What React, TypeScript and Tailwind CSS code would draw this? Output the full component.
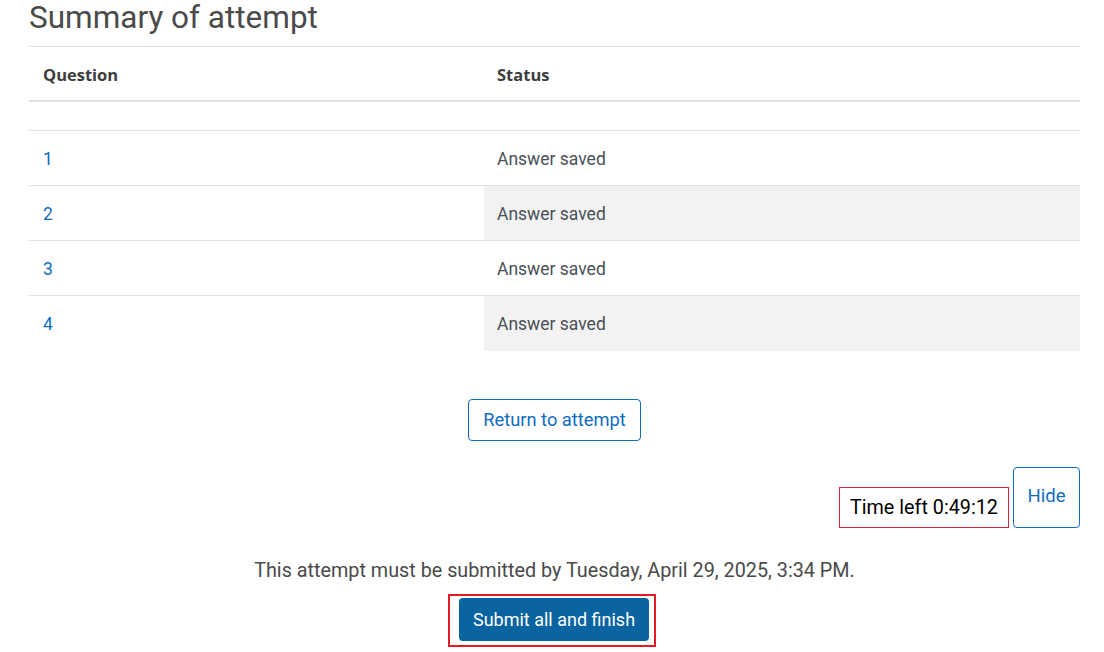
import React from "react";

const rows = [1, 2, 3, 4];

const App: React.FC = () => {
  return (
    <div className="w-[1104px] h-[652px] bg-white overflow-hidden font-['Roboto',sans-serif] text-[#495057]">
      <div className="px-[29px] pr-[24px]">
        {/* Title */}
        <h2 className="text-[31.5px] leading-[36px] text-[#4a4a4a] font-normal h-[46px]">Summary of attempt</h2>

        {/* Table */}
        <div className="border-t border-[#dee2e6]">
          <div className="flex h-[55px] items-center pt-[3px] border-b-2 border-[#dee2e6] font-['Open_Sans',sans-serif] font-bold text-[16.5px] text-[#3d3d3d]">
            <div className="w-[455px] pl-[14px]">Question</div>
            <div className="flex-1 pl-[13px]">Status</div>
          </div>
          <div className="h-[29px] border-b border-[#dee2e6]" />
          {rows.map((n, i) => (
            <div key={n} className={`flex h-[55px] text-[17.5px] ${i < rows.length - 1 ? "border-b border-[#dee2e6]" : ""}`}>
              <div className="w-[455px] pl-[14px] flex items-center text-[#0f6cbf] pt-[2px]">{n}</div>
              <div className={`flex-1 pl-[13px] flex items-center pt-[2px] ${i % 2 === 1 ? "bg-[#f2f2f2]" : ""}`}>Answer saved</div>
            </div>
          ))}
        </div>

        {/* Return button */}
        <div className="flex justify-center mt-[48px]">
          <button className="h-[42px] px-[14px] border border-[#0f6cbf] rounded-[4px] text-[#0f6cbf] text-[18.3px]">
            Return to attempt
          </button>
        </div>

        {/* Timer */}
        <div className="flex justify-end items-end gap-[4px] mt-[26px]">
          <div className="h-[41px] px-[10px] border border-[#d7263d] flex items-center text-[19.8px] text-black">
            Time left 0:49:12
          </div>
          <button className="h-[61px] w-[67px] border border-[#0f6cbf] rounded-[4px] text-[#0f6cbf] text-[18.5px] pb-[2px]">
            Hide
          </button>
        </div>

        {/* Submit */}
        <div className="flex flex-col items-center mt-[30px]">
          <p className="text-[19.8px] leading-[26px] text-[#4a4a4a]">
            This attempt must be submitted by Tuesday, April 29, 2025, 3:34 PM.
          </p>
          <div className="mt-[10px] mr-[5px] border-2 border-[#e21b23] pl-[9px] pr-[5px] pt-[2px] pb-[4px]">
            <button className="h-[43px] px-[14px] bg-[#0a64a0] rounded-[4px] text-white text-[18px]">
              Submit all and finish
            </button>
          </div>
        </div>
      </div>
    </div>
  );
};

export default App;
